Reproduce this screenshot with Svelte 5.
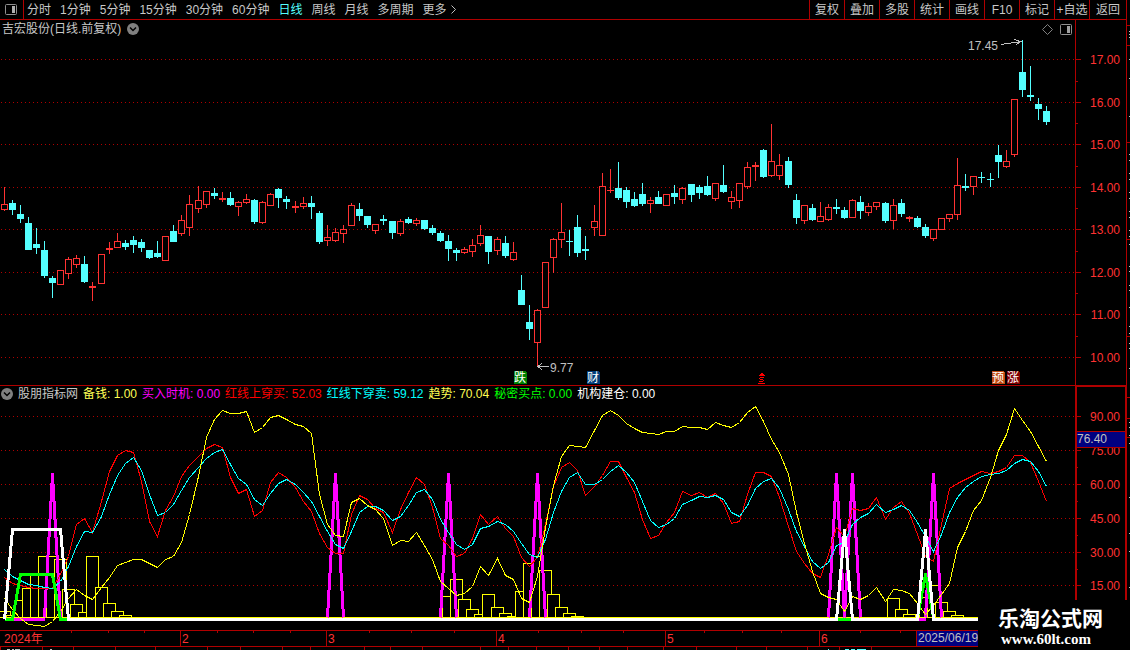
<script>
  const BASE_WIDTH = 1075;
  const PRICE_TOP = 38;
  const IND_TOP = 402;

  let plotWidth = $state(BASE_WIDTH);
  const sx = (px) => Math.round((px * plotWidth) / BASE_WIDTH);
  const cx = (i) => Math.floor(((4.07 + 8.082 * i) * plotWidth) / BASE_WIDTH);

  const periods = ['分时', '1分钟', '5分钟', '15分钟', '30分钟', '60分钟', '日线', '周线', '月线', '多周期'];
  const tools = ['复权', '叠加', '多股', '统计', '画线', 'F10', '标记', '+自选', '返回'];
  let period = $state('日线');

  // kind (r = up, c = down), high, body top, body bottom, low
  const candles = `r187,204,210,211 c200,203,210,215 c205,214,219,223 c217,223,250,250 c228,244,248,254 c241,250,276,278
c276,278,283,298 r270,270,285,285 r257,259,274,279 r255,258,265,268 c256,264,282,283 r282,286,288,301 r254,254,284,284
r242,248,250,254 r233,241,248,248 c240,243,247,250 c236,240,245,253 c239,242,248,252 c250,250,258,259 c241,253,257,258
r236,236,261,261 c225,231,242,242 r215,220,234,236 r195,204,228,236 r186,200,209,213 r191,191,205,208 c188,193,196,199
r192,198,200,202 c192,198,205,206 r201,202,207,216 r194,199,203,204 c199,200,222,224 r201,202,223,224 r193,194,206,206
c188,189,198,208 c196,199,202,209 r201,206,208,213 r197,203,207,209 c196,203,207,219 c211,213,242,244 r225,237,241,246
r228,232,241,242 r225,229,234,243 r203,205,226,226 c203,209,216,221 c216,216,225,228 r224,224,231,234 c215,219,221,225
c221,221,233,239 r219,221,234,236 c217,219,223,224 r218,220,224,226 c220,220,229,230 c225,228,233,235 c231,233,241,242
c235,241,249,261 c248,250,253,261 r247,249,253,254 r239,245,252,257 r225,235,244,246 c236,236,252,264 r237,239,251,255
c236,243,256,258 r242,252,260,261 c275,290,305,305 c305,322,329,340 r309,310,343,367 r262,262,308,308 r238,239,258,273
r203,232,240,248 c230,241,242,256 c215,227,253,257 c236,249,251,260 r205,221,228,236 r173,186,236,236 r169,190,191,193
c162,188,198,200 c187,190,202,208 c192,199,206,207 c183,194,204,206 r197,200,204,213 c191,197,204,204 r194,194,206,206
c185,193,197,204 r187,188,200,204 c184,184,195,202 c185,187,193,199 c176,186,195,196 r183,183,199,201 c165,185,192,193
r191,197,202,209 r183,183,201,208 r162,167,187,189 r162,165,167,181 c149,150,177,178 r124,161,176,177 r154,165,176,180
c157,161,185,188 c194,200,218,224 r205,205,221,224 c204,208,220,221 r202,216,222,222 r204,207,220,221 c199,207,209,214
c207,210,218,219 r199,200,218,218 c196,202,211,219 r203,206,213,216 r202,202,207,210 c202,203,221,223 r199,205,221,229
c199,203,214,217 r216,217,219,222 c216,218,227,228 c224,227,236,238 r229,229,239,241 r218,218,230,230 r214,214,219,222
r158,185,215,220 c174,186,188,191 r176,176,187,195 c172,177,178,183 c173,179,180,187 c145,155,162,178 r150,161,167,168
r99,99,155,157 c40,72,90,97 c66,95,97,101 c98,104,109,120 c106,111,122,125`
    .split(/\s+/)
    .map((s) => {
      const [high, top, bottom, low] = s.slice(1).split(',').map(Number);
      return { up: s[0] === 'r', high, top, bottom, low };
    });

  const priceTicks = [59, 102, 144, 187, 229, 272, 314, 357].map((y, i) => ({ y, label: (17 - i).toFixed(2) }));
  const priceHalf = [81, 123, 166, 208, 251, 293, 336];
  const indTicks = [416, 450, 484, 518, 552, 585].map((y, i) => ({ y, label: (90 - i * 15).toFixed(2) }));
  const indHalf = [467, 501, 535, 569];

  const trend = [598,609,618,624,625,626,621,611,598,589,595,599,587,577,565,562,559,559,563,567,559,556,542,514,476,437,419,410,413,413,411,432,427,417,415,419,424,426,433,494,524,535,536,502,498,505,509,518,545,540,541,532,545,559,581,588,595,593,586,566,575,558,575,579,598,602,576,527,485,456,445,446,447,430,415,410,415,423,428,432,433,434,431,431,426,427,427,429,422,425,427,422,412,406,421,439,452,474,512,543,571,593,597,599,611,596,599,595,587,601,589,590,593,603,614,605,594,583,547,531,510,500,477,450,434,408,420,431,446,461];
  const fast = [577,583,585,587,588,588,588,574,556,524,518,532,501,471,455,450,452,481,521,536,510,496,476,465,456,448,444,447,477,493,489,516,510,482,472,477,487,501,511,533,547,553,553,514,495,499,508,512,532,509,492,477,484,507,538,545,556,553,538,514,524,516,528,536,557,566,557,524,486,467,462,470,495,486,475,461,461,477,492,519,538,535,522,512,491,495,492,497,493,503,523,521,494,472,472,476,497,526,551,563,573,577,554,527,536,508,510,508,497,519,507,501,513,534,556,561,524,488,483,479,475,471,473,471,467,455,455,462,481,501];
  const slow = [569,576,580,584,585,587,588,581,566,546,531,532,516,494,475,463,457,470,494,515,512,504,490,477,467,458,452,449,464,478,484,499,505,493,483,479,484,492,501,516,531,544,548,531,512,506,506,510,520,516,505,492,489,499,519,532,544,549,544,528,526,521,524,531,543,554,557,539,512,491,477,472,484,484,479,471,465,472,482,501,520,527,524,518,504,500,496,497,495,499,512,516,505,488,481,478,488,509,531,546,561,568,562,545,542,524,517,513,504,512,509,505,510,522,536,551,534,512,497,487,481,476,474,473,470,463,459,461,471,486];

  const columns = [
    [0,611],[1,615],[2,600],[3,588],[4,574],[5,556],[6,556],[7,559],[8,589],[9,604],[10,612],[11,556],[12,587],[13,603],[14,611],[15,615],
    [55,596],[56,579],[57,599],[58,609],[59,614],[60,594],[61,607],[62,613],[63,616],[64,591],[65,563],[66,556],[67,570],[68,594],[69,607],[70,613],[71,616],
    [110,598],[111,609],[112,614],[114,597],[115,585],[116,602],[117,611],[118,615]
  ];
  const spikes = [6, 41, 55, 66, 103, 105, 115];

  const line = (ys) => ys.map((y, i) => `${cx(i) + 0.5},${y - IND_TOP + 0.5}`).join(' ');
  const P = (i, y) => `${cx(i) + 0.5} ${y - IND_TOP + 0.5}`;
  const magentaPath = $derived(
    `M${P(0, 619)}L${P(5, 619)}` + spikes.map((i) => `M${P(i - 1, 617)}L${P(i, 474)}L${P(i + 1, 617)}`).join('') + `M${P(113, 619)}L${P(114, 619)}`
  );
  const greenPath = $derived(
    `M${P(0, 619)}L${P(1, 619)}L${P(2, 574)}L${P(6, 574)}L${P(7, 619)}L${P(8, 619)}M${P(103, 619)}L${P(105, 619)}M${P(113, 617)}L${P(114, 574)}L${P(115, 617)}`
  );
  const whitePath = $derived(
    `M${P(0, 619)}L${P(1, 529)}L${P(7, 529)}L${P(8, 619)}L${P(103, 619)}L${P(104, 530)}L${P(105, 619)}L${P(113, 619)}L${P(114, 530)}L${P(115, 619)}H${plotWidth}`
  );

  const readings = [
    ['备钱', '1.00', 'yellow'],
    ['买入时机', '0.00', 'magenta'],
    ['红线上穿买', '52.03', 'red'],
    ['红线下穿卖', '59.12', 'cyan'],
    ['趋势', '70.04', 'yellow'],
    ['秘密买点', '0.00', 'green'],
    ['机构建仓', '0.00', 'white']
  ];

  const badges = [
    [514, '跌', '#008000'],
    [587, '财', '#003c78'],
    [992, '预', '#c04a10'],
    [1007, '涨', '#800000']
  ];

  const months = [[180, '2'], [326, '3'], [496, '4'], [665, '5'], [819, '6']];
  const weeks = [71, 108, 144, 217, 253, 290, 369, 411, 454, 538, 581, 623, 704, 742, 781, 860, 900];
  const tabs = [0, 42, 73, 115, 155, 207, 240, 282, 310, 364, 390, 422, 480, 508, 536, 568, 599, 627, 663, 696, 736, 766, 807, 839, 871];

  const edgeLines = [25, 45, 142, 239, 336, 397, 418, 437];
  const edgeDots = [31, 34, 37, 59, 78, 116, 154, 160, 173, 179, 192, 198, 211, 217, 230, 236, 244, 266, 271, 285, 290, 307, 326, 333, 343, 348, 368, 422, 427, 435, 443, 497, 533, 551, 587];
</script>

<div class="terminal">
  <main>
    <nav class="toolbar">
      <button class="panel-toggle" aria-label="面板">
        <svg width="12" height="11" viewBox="0 0 12 11"><rect x=".5" y=".5" width="11" height="10" rx="1" fill="none" stroke="#909090" /><rect x="7" y="2" width="3" height="7" fill="#b0b0b0" /></svg>
      </button>
      <div class="periods">
        {#each periods as p}
          <button class:active={p === period} onclick={() => (period = p)}>{p}</button>
        {/each}
        <button class="more">更多<svg width="6" height="9" viewBox="0 0 6 9"><path d="M.5 .5L4.500 4.500L.5 8.500" fill="none" stroke="#c0c0c0" /></svg></button>
      </div>
      <div class="tools">
        {#each tools as t}<button>{t}</button>{/each}
      </div>
    </nav>

    <section class="row price">
      <div class="plot" bind:clientWidth={plotWidth}>
        <header class="title">
          <h1>吉宏股份(日线.前复权)</h1>
          <button aria-label="展开">
            <svg width="12" height="12" viewBox="0 0 12 12"><circle cx="6" cy="6" r="6" fill="#808080" /><path d="M3 4.500L6 7.500L9 4.500" fill="none" stroke="#000" stroke-width="1.500" /></svg>
          </button>
          <span class="title-icons">
            <svg width="11" height="11" viewBox="0 0 11 11"><path d="M5.500 .5L10.500 5.500L5.500 10.500L.5 5.500Z" fill="none" stroke="#808080" /></svg>
            <svg width="12" height="11" viewBox="0 0 12 11"><rect x=".5" y=".5" width="11" height="10" rx="1" fill="none" stroke="#909090" /><rect x="7" y="2" width="3" height="7" fill="#a0a0a0" /></svg>
          </span>
        </header>
        <svg class="canvas" width={plotWidth} height="347" shape-rendering="crispEdges">
          {#each priceTicks as t}
            <line class="grid" x1="1" x2={plotWidth} y1={t.y - PRICE_TOP + 0.5} y2={t.y - PRICE_TOP + 0.5} />
          {/each}
          {#each candles as c, i}
            {@const x = cx(i)}
            {#if c.up}
              <g fill="#ff3232">
                <rect {x} y={c.high - PRICE_TOP} width="1" height={c.top - c.high} />
                <rect {x} y={c.bottom - PRICE_TOP} width="1" height={c.low - c.bottom} />
              </g>
              {#if c.bottom - c.top < 3}
                <rect x={x - 3} y={c.top - PRICE_TOP} width="7" height={c.bottom - c.top} fill="#ff3232" />
              {:else}
                <rect x={x - 2.5} y={c.top - PRICE_TOP + 0.5} width="6" height={c.bottom - c.top - 1} fill="#000" stroke="#ff3232" />
              {/if}
            {:else}
              <rect {x} y={c.high - PRICE_TOP} width="1" height={c.low - c.high} fill="#54ffff" />
              <rect x={x - 3} y={c.top - PRICE_TOP} width="7" height={c.bottom - c.top} fill="#54ffff" />
            {/if}
          {/each}
          <g fill="none" stroke="#c0c0c0">
            <path d="M{sx(1001)} 6.500L{sx(1021)} 3.500M{sx(1014)} 1.500L{sx(1021)} 3.500L{sx(1016)} 6.500" />
            <path d="M{sx(549)} 328.500H{sx(538)}M{sx(542)} 325.500L{sx(538)} 328.500L{sx(542)} 331.500" />
          </g>
          <text x={sx(998)} y="12" fill="#c0c0c0" text-anchor="end">17.45</text>
          <text x={sx(550)} y="334" fill="#c0c0c0">9.77</text>
          {#each badges as [x, label, fill]}
            <path d="M{sx(x)} 333h11l2 2v11h-13z" {fill} />
            <text x={sx(x) + 6} y="344" fill="#fff" text-anchor="middle">{label}</text>
          {/each}
          <g transform="translate({sx(758)} 335)" fill="#ff0000">
            <path d="M3 0h2v1h1v1h1v1h-6v-1h1v-1h1z" />
            <path d="M2 4h4v1h-4zM1 5h1v1h-1zM2 6h3v1h-3zM5 7h1v1h-1zM1 8h4v1h-4zM0 10h7v1h-7z" />
          </g>
        </svg>
      </div>
      <svg class="axis" height="365" shape-rendering="crispEdges">
        <line x1=".5" x2=".5" y1="0" y2="365" stroke="#b00000" />
        {#each priceTicks as t}
          <rect x="1" y={t.y - 20} width="5" height="1" fill="#b00000" />
          <text x="45" y={t.y - 15} fill="#ff3232" text-anchor="end">{t.label}</text>
        {/each}
        {#each priceHalf as y}<rect x="1" y={y - 20} width="2" height="1" fill="#b00000" />{/each}
      </svg>
    </section>

    <section class="row indicator">
      <div class="plot">
        <header class="readings">
          <button aria-label="指标菜单">
            <svg width="12" height="12" viewBox="0 0 12 12"><circle cx="6" cy="6" r="6" fill="#808080" /><path d="M3 4.500L6 7.500L9 4.500" fill="none" stroke="#000" stroke-width="1.500" /></svg>
          </button>
          <span>股朋指标网</span>
          {#each readings as [name, value, tone]}<span class={tone}>{name}: {value}</span>{/each}
        </header>
        <svg class="canvas" width={plotWidth} height="228" shape-rendering="crispEdges">
          {#each indTicks as t}
            <line class="grid" x1="1" x2={plotWidth} y1={t.y - IND_TOP + 0.5} y2={t.y - IND_TOP + 0.5} />
          {/each}
          {#each columns as [i, top]}
            <rect x={cx(i) - 5.5} y={top - IND_TOP + 0.5} width="12" height={617 - top} fill="#000" stroke="#ffff00" />
          {/each}
          <rect x="0" y="215" width={plotWidth} height="1" fill="#ffff00" />
          <path d={magentaPath} class="thick" stroke="#ff00ff" />
          <polyline points={line(fast)} fill="none" stroke="#ff0000" />
          <polyline points={line(slow)} fill="none" stroke="#00ffff" />
          <polyline points={line(trend)} fill="none" stroke="#ffff00" />
          <path d={greenPath} class="thick" stroke="#00ff00" />
          <path d={whitePath} class="thick" stroke="#ffffff" />
          <rect x={cx(103) + 2} y="216" width={cx(105) - cx(103) - 3} height="3" fill="#00ff00" />
        </svg>
      </div>
      <svg class="axis lower" height="244" shape-rendering="crispEdges">
        {#each indTicks as t}
          <rect x="2" y={t.y - 386} width="4" height="1" fill="#b00000" />
          <text x="45" y={t.y - 381} fill="#ff3232" text-anchor="end">{t.label}</text>
        {/each}
        {#each indHalf as y}<rect x="2" y={y - 386} width="1" height="1" fill="#b00000" />{/each}
        <rect x="1" y="45" width="49" height="17" fill="#b00000" />
        <rect x="2" y="46" width="48" height="15" fill="#000080" />
        <rect x="0" y="0" width="2" height="244" fill="#b00000" />
        <text x="2" y="57" fill="#c0c0c0">76.40</text>
        <rect x="0" y="0" width="51" height="1" fill="#b00000" />
        <rect x="50" y="0" width="1" height="244" fill="#b00000" />
      </svg>
    </section>

    <footer class="timeline">
      <svg width="100%" height="20" shape-rendering="crispEdges">
        <rect width="100%" height="1" fill="#b00000" />
        <rect width="100%" y="16" height="1" fill="#b00000" />
        <text x="4" y="13" fill="#ff3232">2024年</text>
        {#each weeks as x}<rect x={sx(x)} y="1" width="1" height="2" fill="#b00000" />{/each}
        {#each months as [x, label]}
          <rect x={sx(x)} y="1" width="1" height="15" fill="#b00000" />
          <text x={sx(x) + 2} y="13" fill="#ff3232">{label}</text>
        {/each}
        <rect x={sx(916)} y="1" width="1" height="15" fill="#b00000" />
        <rect x={sx(916) + 1} y="1" width="62" height="15" fill="#000080" />
        <text x={sx(916) + 2} y="12" fill="#c0c0c0">2025/06/19</text>
        {#each tabs as x}<rect x={sx(x)} y="17" width="1" height="3" fill="#b00000" />{/each}
        <path d="M7 19.500h3m2 0h2m1 0h5m30 0h2" stroke="#c0c0c0" />
        <path d="M{sx(828)} 19.500h1M{sx(845)} 19.500h4m2 0h4m2 0h9" stroke="#54ffff" />
      </svg>
    </footer>
  </main>

  <svg class="edge" width="4" height="650" shape-rendering="crispEdges">
    <rect width="1" height="650" fill="#b00000" />
    {#each edgeLines as y}<rect x="1" {y} width="3" height="1" fill="#b00000" />{/each}
    {#each edgeDots as y}<rect x="3" {y} width="1" height="1" fill="#c0c0c0" />{/each}
  </svg>

  <a class="brand" href="#home">
    <strong>乐淘公式网</strong>
    <span>www.60lt.com</span>
  </a>
</div>

<style>
  :global(body) {
    margin: 0;
    background: #000;
  }
  .terminal {
    position: relative;
    display: flex;
    background: #000;
    color: #c8c8c8;
    font: 12px/16px 'Liberation Sans', 'Noto Sans CJK SC', sans-serif;
    overflow: hidden;
  }
  main {
    flex: 1;
    min-width: 0;
  }
  svg {
    display: block;
    flex: none;
  }
  button {
    margin: 0;
    padding: 0;
    border: 0;
    background: none;
    color: inherit;
    font: inherit;
    white-space: nowrap;
    cursor: pointer;
  }
  .toolbar {
    display: flex;
    height: 19px;
    border-bottom: 1px solid #b00000;
  }
  .panel-toggle {
    display: flex;
    align-items: center;
    padding: 0 6px 1px 5px;
    border-right: 1px solid #b00000;
  }
  .periods {
    display: flex;
    gap: 9px;
    padding-left: 3px;
  }
  .periods .active {
    color: #54ffff;
  }
  .more {
    display: flex;
    align-items: center;
    gap: 4px;
  }
  .tools {
    display: flex;
    margin-left: auto;
  }
  .tools button {
    width: 35px;
    border-left: 1px solid #b00000;
  }
  .tools button:last-child {
    width: 37px;
  }
  .row {
    display: grid;
    grid-template-columns: minmax(0, 1fr) 51px;
  }
  .plot {
    min-width: 0;
    overflow: hidden;
  }
  .axis {
    width: 51px;
  }
  .title {
    display: flex;
    align-items: center;
    gap: 6px;
    height: 18px;
    padding: 0 3px 0 2px;
  }
  h1 {
    margin: 0;
    font: inherit;
  }
  .title-icons {
    display: flex;
    gap: 7px;
    margin-left: auto;
  }
  .indicator {
    border-top: 1px solid #b00000;
  }
  .readings {
    display: flex;
    align-items: center;
    gap: 5px;
    height: 16px;
    padding-left: 1px;
    white-space: nowrap;
  }
  .yellow { color: #ffff54; }
  .magenta { color: #ff00ff; }
  .red { color: #ff0000; }
  .cyan { color: #00ffff; }
  .green { color: #00ff00; }
  .white { color: #ffffff; }
  .grid {
    stroke: #b00000;
    stroke-dasharray: 1 3;
  }
  .thick {
    fill: none;
    stroke-width: 3;
    stroke-linejoin: round;
  }
  .brand {
    position: absolute;
    right: 0;
    bottom: 0;
    box-sizing: border-box;
    width: 152px;
    height: 50px;
    padding: 7px 0 0 20px;
    background: #000;
    color: #fff;
    text-decoration: none;
  }
  .brand strong {
    display: block;
    font: bold 21px/24px 'Liberation Sans', 'Noto Sans CJK SC', sans-serif;
  }
  .brand span {
    display: block;
    padding-left: 3px;
    font: bold 15px/17px 'Liberation Serif', serif;
  }
</style>
